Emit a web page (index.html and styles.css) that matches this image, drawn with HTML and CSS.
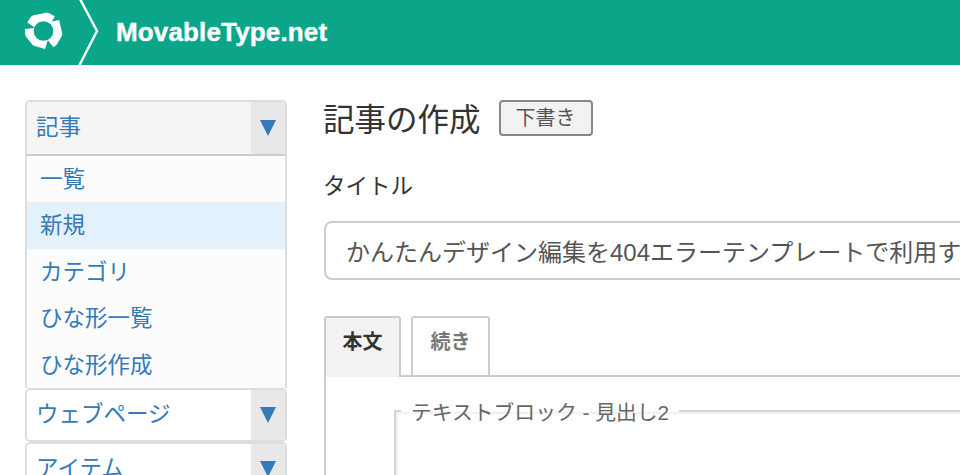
FILE: index.html
```html
<!DOCTYPE html>
<html lang="ja">
<head>
    <meta charset="UTF-8">
    <meta name="viewport" content="width=device-width, initial-scale=1.0">
    <title>記事の作成 - MovableType.net</title>
    <link rel="stylesheet" href="styles.css">
</head>
<body>

<!-- ヘッダー -->
<header class="site-header">
    <svg class="logo" width="100" height="65" viewBox="0 0 100 65">
        <g fill="none" stroke="#fff" stroke-width="9.5" stroke-linejoin="round">
            <path d="M31 25 L34.5 20 L47 17.5 L52.5 20.5"/>
            <path d="M54.5 21 L57.5 34 L53 41.5 L50.5 43.5"/>
            <path d="M46.5 44.5 L36 41.5 L30 34 L29.5 28.5"/>
        </g>
        <circle cx="43.5" cy="31" r="9.8" fill="#0ba58a"/>
        <path d="M80 -1 L97 31 L79 66" fill="none" stroke="#fff" stroke-width="2.4"/>
    </svg>
    <div class="brand">MovableType.net</div>
</header>

<div class="page">
    <!-- サイドメニュー -->
    <nav class="sidebar">
        <div class="menu-group open">
            <div class="menu-head current">
                <span class="menu-label">記事</span>
                <span class="menu-toggle"><i class="arrow"></i></span>
            </div>
            <ul class="menu-list">
                <li>一覧</li>
                <li class="active">新規</li>
                <li>カテゴリ</li>
                <li>ひな形一覧</li>
                <li>ひな形作成</li>
            </ul>
        </div>
        <div class="menu-group">
            <div class="menu-head">
                <span class="menu-label">ウェブページ</span>
                <span class="menu-toggle"><i class="arrow"></i></span>
            </div>
        </div>
        <div class="menu-group">
            <div class="menu-head">
                <span class="menu-label">アイテム</span>
                <span class="menu-toggle"><i class="arrow"></i></span>
            </div>
        </div>
    </nav>

    <!-- 本体 -->
    <main class="content">
        <div class="page-title">
            <h1>記事の作成</h1>
            <span class="status">下書き</span>
        </div>

        <label class="field-label" for="title">タイトル</label>
        <input class="title-input" id="title" type="text" value="かんたんデザイン編集を404エラーテンプレートで利用する">

        <div class="tabs">
            <div class="tab active">本文</div>
            <div class="tab">続き</div>
        </div>
        <div class="editor">
            <fieldset class="block">
                <legend>テキストブロック - 見出し2</legend>
            </fieldset>
        </div>
    </main>
</div>

</body>
</html>
```

FILE: styles.css
```css
* {
    box-sizing: border-box;
}
html, body {
    height: 475px;
    overflow: hidden;
}
body {
    margin: 0;
    background: #fff;
    color: #333;
    font-family: "Liberation Sans", "Noto Sans CJK JP", sans-serif;
}

/* ヘッダー */
.site-header {
    display: flex;
    align-items: center;
    height: 65px;
    background-color: #0ba58a;
}
.logo {
    flex: none;
    display: block;
}
.brand {
    margin-left: 16px;
    color: #fff;
    font-size: 26px;
    font-weight: 700;
    letter-spacing: 0.15px;
    -webkit-text-stroke: 0.4px #fff;
}

/* レイアウト */
.page {
    display: flex;
    align-items: flex-start;
    width: 1200px;
    height: 410px;
    overflow: hidden;
    padding: 35px 0 0 25px;
}
.sidebar {
    flex: none;
    width: 262px;
}
.content {
    flex: 1;
    margin-left: 37px;
}

/* サイドメニュー */
.menu-group {
    overflow: hidden;
    border: 2px solid #ddd;
    border-radius: 5px;
    background: #fff;
}
.menu-group.open {
    border-bottom: 0;
    border-radius: 5px 5px 0 0;
}
.menu-head {
    display: flex;
    align-items: stretch;
    height: 50px;
}
.menu-head.current {
    height: 54px;
    border-bottom: 2px solid #ccc;
    background: #f5f5f5;
}
.menu-label {
    flex: 1;
    padding-left: 9px;
    color: #337ab7;
    font-size: 22.5px;
    line-height: 50px;
}
.current .menu-label {
    line-height: 52px;
}
.menu-toggle {
    display: flex;
    flex: none;
    align-items: center;
    justify-content: center;
    width: 34px;
    background: #e8e8e8;
}
.arrow {
    border-top: 16px solid #337ab7;
    border-right: 8px solid transparent;
    border-left: 8px solid transparent;
}
.menu-list {
    margin: 0;
    padding: 0;
    list-style: none;
    background: #fcfcfc;
}
.menu-list li {
    height: 46.4px;
    padding-left: 13px;
    color: #337ab7;
    font-size: 22.5px;
    line-height: 47px;
}
.menu-list li.active {
    background: #e3f1fc;
}

/* タイトル */
.page-title {
    display: flex;
    align-items: center;
    height: 36px;
}
.page-title h1 {
    margin: 0 0 2px -1px;
    color: #333;
    font-size: 31.5px;
    font-weight: 400;
}
.status {
    width: 94px;
    height: 36px;
    margin-left: 18px;
    border: 2px solid #888;
    border-radius: 4px;
    background: #f2f2f2;
    color: #555;
    font-size: 20px;
    line-height: 32px;
    text-align: center;
}
.field-label {
    display: block;
    margin: 35px 0 0 -1px;
    font-size: 22.5px;
    line-height: 32px;
}
.title-input {
    display: block;
    width: 800px;
    height: 59px;
    margin-top: 18px;
    padding: 0 20px;
    border: 2px solid #ccc;
    border-radius: 8px;
    color: #555;
    font-family: inherit;
    font-size: 24px;
}

/* タブ */
.tabs {
    display: flex;
    gap: 10px;
    margin-top: 36px;
}
.tab {
    width: 79px;
    height: 59px;
    border: 2px solid #ccc;
    border-bottom: 0;
    border-radius: 3px 3px 0 0;
    color: #777;
    font-size: 20px;
    font-weight: 700;
    line-height: 48px;
    text-align: center;
}
.tab.active {
    position: relative;
    width: 77px;
    height: 61px;
    margin-bottom: -2px;
    background: #f2f2f2;
    color: #333;
}
.editor {
    height: 200px;
    padding: 18px 0 0 68px;
    border-top: 2px solid #ccc;
    border-left: 2px solid #ccc;
}
.block {
    height: 200px;
    margin: 0;
    padding: 0;
    border: 0;
    border-top: 2px solid #d4d4d4;
    border-left: 2px solid #d4d4d4;
    box-shadow: inset 2px 2px 3px #eee;
}
.block legend {
    margin-left: 5px;
    padding: 4px 10px 0;
    color: #666;
    font-size: 20.8px;
    line-height: 28px;
}
```
